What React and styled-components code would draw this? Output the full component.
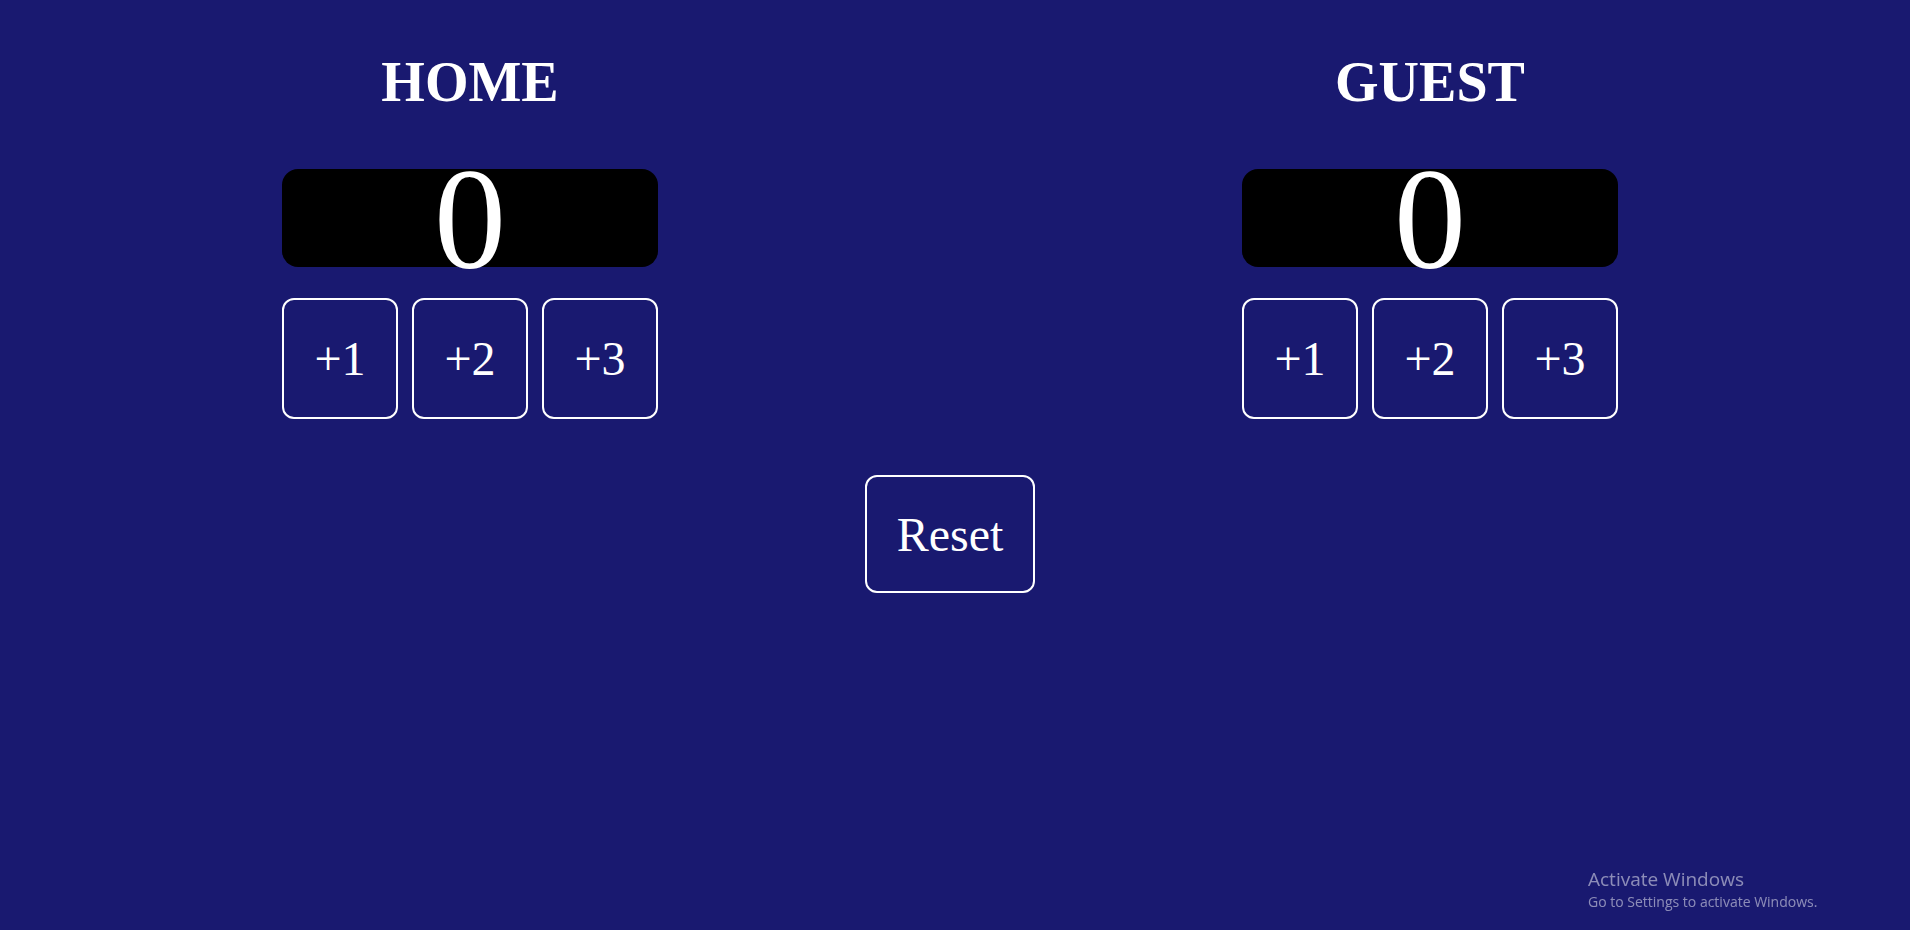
import React, { useState } from "react";
import styled, { createGlobalStyle } from "styled-components";

const GlobalStyle = createGlobalStyle`
  html, body {
    margin: 0;
    background: #191970;
  }
  body {
    font-family: "Liberation Serif", "Times New Roman", serif;
    color: #fff;
  }
`;

const POINTS = [1, 2, 3];

const Team = ({ name, score, onAdd }) => (
  <Column>
    <TeamName>{name}</TeamName>
    <Score>{score}</Score>
    <ButtonRow>
      {POINTS.map((p) => (
        <PointButton key={p} onClick={() => onAdd(p)}>
          +{p}
        </PointButton>
      ))}
    </ButtonRow>
  </Column>
);

export default function App() {
  const [home, setHome] = useState(0);
  const [guest, setGuest] = useState(0);

  const reset = () => {
    setHome(0);
    setGuest(0);
  };

  return (
    <>
      <GlobalStyle />
      <Page>
        <Teams>
          <Team name="HOME" score={home} onAdd={(p) => setHome(home + p)} />
          <Team name="GUEST" score={guest} onAdd={(p) => setGuest(guest + p)} />
        </Teams>
        <ResetButton onClick={reset}>Reset</ResetButton>
      </Page>
      <Watermark>
        <WatermarkTitle>Activate Windows</WatermarkTitle>
        <WatermarkText>Go to Settings to activate Windows.</WatermarkText>
      </Watermark>
    </>
  );
}

const Page = styled.main`
  display: flex;
  flex-direction: column;
  align-items: center;
  padding: 50px 10px 0 0;
  min-height: 880px;
`;

const Teams = styled.div`
  display: flex;
  justify-content: center;
  gap: 584px;
`;

const Column = styled.section`
  width: 376px;
  display: flex;
  flex-direction: column;
  align-items: center;
`;

const TeamName = styled.h1`
  margin: 0 0 55px;
  font-size: 56px;
  font-weight: bold;
  line-height: 64px;
`;

const Score = styled.div`
  width: 100%;
  height: 98px;
  background: #000;
  border-radius: 16px;
  font-size: 144px;
  line-height: 102px;
  text-align: center;
`;

const ButtonRow = styled.div`
  display: grid;
  grid-template-columns: repeat(3, 116px);
  gap: 14px;
  margin-top: 31px;
`;

const PointButton = styled.button`
  height: 121px;
  background: transparent;
  border: 2px solid #fff;
  border-radius: 12px;
  color: #fff;
  font-family: "Liberation Serif", "Times New Roman", serif;
  font-size: 48px;
  cursor: pointer;
  padding: 0;
`;

const ResetButton = styled(PointButton)`
  width: 170px;
  height: 118px;
  margin-top: 56px;
`;

const Watermark = styled.div`
  position: fixed;
  left: 1588px;
  top: 867px;
  font-family: "Segoe UI", "Open Sans", sans-serif;
  color: rgba(255, 255, 255, 0.5);
  pointer-events: none;
`;

const WatermarkTitle = styled.div`
  font-size: 19px;
  line-height: 25px;
`;

const WatermarkText = styled.div`
  font-size: 14px;
  line-height: 19px;
`;
